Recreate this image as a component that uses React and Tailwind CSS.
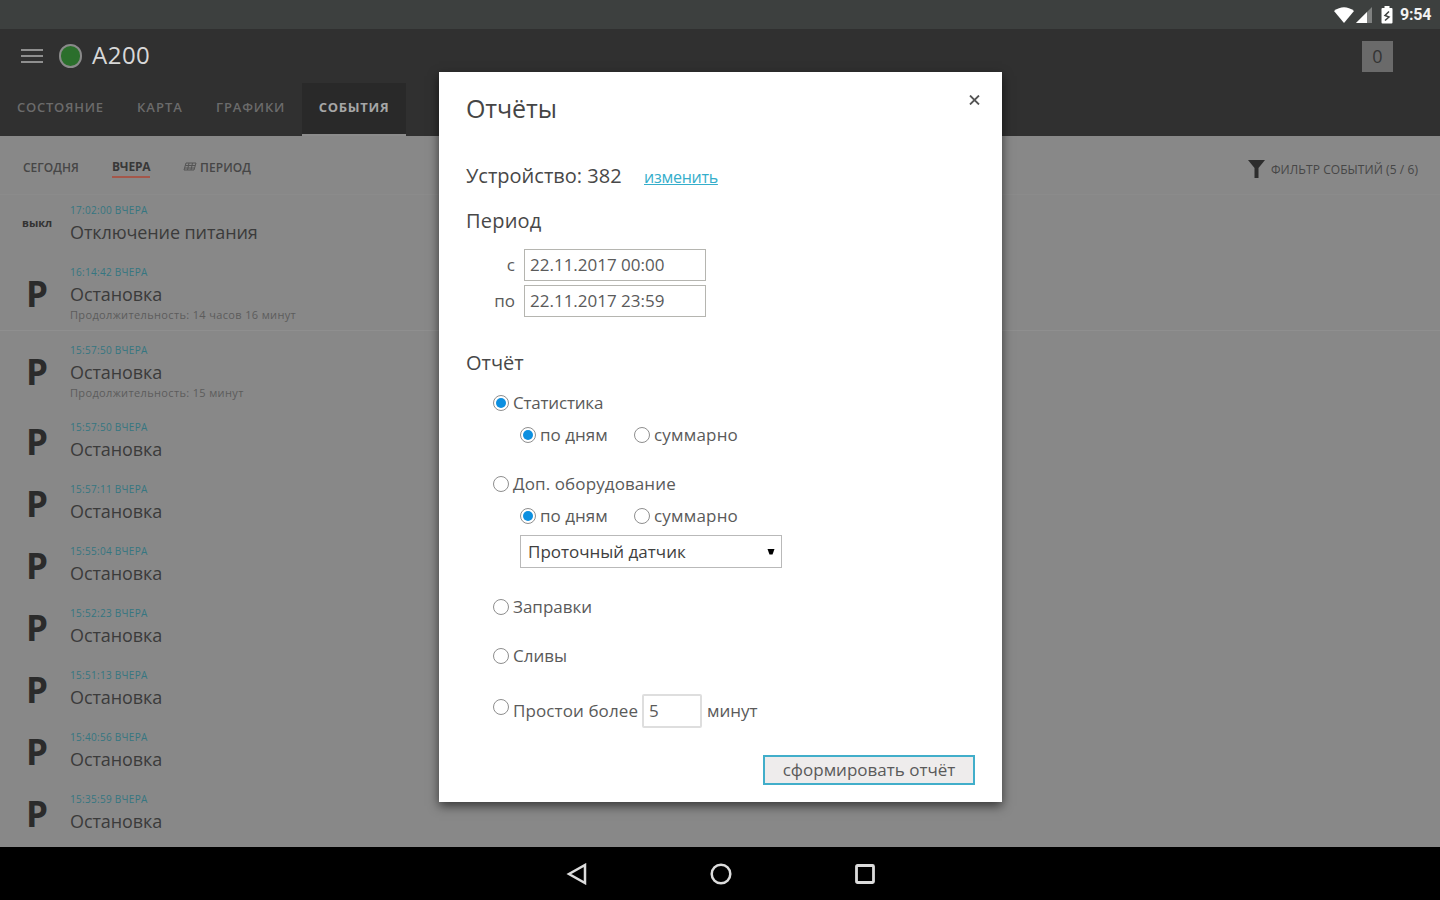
const EVENTS = [
  { time: '17:02:00 ВЧЕРА', title: 'Отключение питания', off: true, h: 'h-[62px]' },
  { time: '16:14:42 ВЧЕРА', title: 'Остановка', note: 'Продолжительность: 14 часов 16 минут', h: 'h-[78px] border-b border-[#8f8f8f]' },
  { time: '15:57:50 ВЧЕРА', title: 'Остановка', note: 'Продолжительность: 15 минут', h: 'h-[77px]' },
  { time: '15:57:50 ВЧЕРА', title: 'Остановка', h: 'h-[62px]' },
  { time: '15:57:11 ВЧЕРА', title: 'Остановка', h: 'h-[62px]' },
  { time: '15:55:04 ВЧЕРА', title: 'Остановка', h: 'h-[62px]' },
  { time: '15:52:23 ВЧЕРА', title: 'Остановка', h: 'h-[62px]' },
  { time: '15:51:13 ВЧЕРА', title: 'Остановка', h: 'h-[62px]' },
  { time: '15:40:56 ВЧЕРА', title: 'Остановка', h: 'h-[62px]' },
  { time: '15:35:59 ВЧЕРА', title: 'Остановка', h: 'h-[62px]' },
];

function StatusBar() {
  return (
    <div className="flex h-[29px] shrink-0 items-center justify-end bg-[#3d403f] pr-2">
      <svg className="mr-px" width="22" height="18" viewBox="0 0 22 18">
        <path d="M11 17 L1 5 Q11 -2.5 21 5 Z" fill="#fff" />
      </svg>
      <svg width="16" height="18" viewBox="0 0 16 18">
        <path d="M0 17 L16 1 V17 Z" fill="#7f8180" />
        <path d="M0 17 L11 6 V17 Z" fill="#fff" />
      </svg>
      <svg className="ml-[9px]" width="12" height="18" viewBox="0 0 12 18">
        <path d="M3.5 0 h5 v2 h2 q1 0 1 1 v13.500 q0 1 -1 1 h-9 q-1 0 -1 -1 V3 q0 -1 1 -1 h2 Z" fill="#fff" />
        <path d="M8 5.500 L4 9.500 L8 11 L4 14.500" fill="none" stroke="#3d403f" strokeWidth="1.500" />
      </svg>
      <span className="ml-[7px] w-[32px] whitespace-nowrap pt-px font-['Roboto',sans-serif] text-[16px] leading-[28px] font-bold tracking-[-0.2px] text-[#f2f2f2]">9:54</span>
    </div>
  );
}

function Header() {
  const tab = 'flex items-center pb-[3px] text-[13px] font-semibold text-[#6b6b6b] whitespace-nowrap';
  return (
    <header className="flex h-[107px] shrink-0 flex-col bg-[#303030]">
      <div className="flex h-[54px] items-center pl-[21px] pr-[47px]">
        <div className="flex w-[22px] flex-col gap-[4px]">
          <div className="h-[2px] bg-[#8f8f8f]" />
          <div className="h-[2px] bg-[#8f8f8f]" />
          <div className="h-[2px] bg-[#8f8f8f]" />
        </div>
        <div className="ml-[16px] h-[24px] w-[23px] rounded-full border-2 border-[#8a8a8a] bg-[#2b6f2c]" />
        <h1 className="ml-[10px] pb-[2px] text-[24px] tracking-[0.5px] text-[#d8d8d8]">A200</h1>
        <div className="ml-auto flex h-[31px] w-[31px] items-center justify-center bg-[#6a6a6a] text-[18px] text-[#343434]">0</div>
      </div>
      <nav className="flex h-[53px] pl-[17px]">
        <div className={`${tab} w-[120px] tracking-[0.75px]`}>СОСТОЯНИЕ</div>
        <div className={`${tab} w-[79px] tracking-[1px]`}>КАРТА</div>
        <div className={`${tab} w-[86px] tracking-[0.85px]`}>ГРАФИКИ</div>
        <div className="flex w-[104px] items-center justify-center border-b-2 border-[#8c8c8c] bg-[#292929] pb-[2px] text-[13px] font-bold tracking-[0.7px] text-[#a6a6a6]">СОБЫТИЯ</div>
      </nav>
    </header>
  );
}

function FilterBar() {
  return (
    <div className="flex h-[59px] shrink-0 items-center border-b border-[#8b8b8b] pl-[23px] pr-[22px] pb-px pt-[5px] text-[12px] font-semibold text-[#464646]">
      <div className="w-[89px] pt-px">СЕГОДНЯ</div>
      <div className="flex w-[71px] pt-px">
        <div className="border-b-2 border-[#a4574a] font-bold tracking-[-0.2px] text-[#383838]">ВЧЕРА</div>
      </div>
      <svg width="14" height="11" viewBox="0 0 14 11" fill="none" stroke="#555" strokeWidth="1">
        <path d="M3 1 H13 L11 8 H1 Z M2.500 3.500 H12 M2 6 H11.500 M6 1 L4.500 8 M9.500 1 L8 8" />
      </svg>
      <div className="ml-[3px] pt-px tracking-[0.1px]">ПЕРИОД</div>
      <svg className="ml-auto mt-[4px]" width="17" height="19" viewBox="0 0 17 19">
        <path d="M0 0 H17 L10.500 8 V18 L6.500 18 V8 Z" fill="#2d2d2d" />
      </svg>
      <div className="ml-[6px] whitespace-nowrap pt-[5px] text-[12px] font-normal tracking-[0.07px]">ФИЛЬТР СОБЫТИЙ (5 / 6)</div>
    </div>
  );
}

function EventRow({ event }) {
  return (
    <div className={`flex shrink-0 ${event.h}`}>
      <div className="flex w-[70px] shrink-0 items-center pl-[22px]">
        {event.off ? (
          <span className="pt-[3px] text-[11px] font-bold text-[#333]">выкл</span>
        ) : (
          <span className="pl-[4px] pt-[5px] text-[35px] leading-[36px] font-bold text-[#2b2b2b]">P</span>
        )}
      </div>
      <div className="flex flex-col whitespace-nowrap pt-[11px]">
        <div className="h-[16px] text-[10px] leading-[16px] tracking-[0.3px] text-[#357681]">{event.time}</div>
        <div className="h-[28px] text-[18px] leading-[28px] tracking-[-0.1px] text-[#3b3b3b]">{event.title}</div>
        {event.note && <div className="text-[11px] leading-[13px] tracking-[0.35px] text-[#5c5c5c]">{event.note}</div>}
      </div>
    </div>
  );
}

function Radio({ checked }) {
  return (
    <span className="flex h-[16px] w-[16px] shrink-0 items-center justify-center rounded-full border border-[#8e8e8e] bg-white">
      {checked && <span className="h-[10px] w-[10px] rounded-full bg-[#0c8fe0]" />}
    </span>
  );
}

function Choice({ checked, children, className = '' }) {
  return (
    <label className={`flex h-[30px] items-center gap-[4px] whitespace-nowrap ${className}`}>
      <Radio checked={checked} />
      <span>{children}</span>
    </label>
  );
}

function PeriodModes() {
  return (
    <div className="flex pl-[54px]">
      <Choice checked className="w-[114px]">по дням</Choice>
      <Choice className="tracking-[0.2px]">суммарно</Choice>
    </div>
  );
}

function ReportDialog() {
  return (
    <section className="absolute left-[439px] top-[72px] flex h-[730px] w-[563px] flex-col bg-white pl-[27px] pr-[27px] text-[17px] text-[#5a5a5a] shadow-[0_4px_10px_rgba(0,0,0,0.6)]">
      <div className="mt-[16px] flex h-[40px] justify-between">
        <h2 className="text-[25px] leading-[40px] tracking-[-0.1px] text-[#454545]">Отчёты</h2>
        <svg className="mr-[-5px] mt-[7px]" width="11" height="10" viewBox="0 0 11 10">
          <path d="M1 0.500 L10 9.500 M10 0.500 L1 9.500" stroke="#555" strokeWidth="1.800" />
        </svg>
      </div>
      <div className="mt-[33px] flex h-[30px] items-center text-[20px] text-[#484848]">
        <span className="w-[178px] whitespace-nowrap">Устройство: 382</span>
        <a className="pt-[2px] text-[16px] tracking-[-0.25px] text-[#35aecb] underline">изменить</a>
      </div>
      <h3 className="mt-[15px] text-[20px] leading-[30px] tracking-[0.2px] text-[#484848]">Период</h3>
      <div className="mt-[13px] flex h-[32px] items-center">
        <span className="w-[49px] text-right">с</span>
        <div className="ml-[9px] flex h-[32px] w-[182px] items-center border border-[#b5b5b0] pl-[5px]">22.11.2017 00:00</div>
      </div>
      <div className="mt-[4px] flex h-[32px] items-center">
        <span className="w-[49px] text-right">по</span>
        <div className="ml-[9px] flex h-[32px] w-[182px] items-center border border-[#b5b5b0] pl-[5px]">22.11.2017 23:59</div>
      </div>
      <h3 className="mt-[31px] text-[20px] leading-[30px] text-[#484848]">Отчёт</h3>
      <Choice checked className="mt-[10px] pl-[27px] tracking-[-0.2px]">Статистика</Choice>
      <div className="mt-[2px]"><PeriodModes /></div>
      <Choice className="mt-[19px] pl-[27px] tracking-[0.1px]">Доп. оборудование</Choice>
      <div className="mt-[2px]"><PeriodModes /></div>
      <div className="ml-[54px] mt-[4px] flex h-[33px] w-[262px] items-center justify-between border border-[#b9b9b9] pl-[7px] pr-[6px] text-[#404040]">
        <span>Проточный датчик</span>
        <svg width="8" height="6" viewBox="0 0 8 6"><path d="M0.500 0 H7.500 L5.500 5.500 H2.500 Z" fill="#000" /></svg>
      </div>
      <Choice className="mt-[24px] pl-[27px]">Заправки</Choice>
      <Choice className="mt-[19px] pl-[27px]">Сливы</Choice>
      <div className="mt-[23px] flex h-[34px] items-center whitespace-nowrap pl-[27px]">
        <span className="mb-[9px]"><Radio /></span>
        <span className="ml-[4px] w-[129px] tracking-[0.1px]">Простои более</span>
        <div className="flex h-[34px] w-[60px] items-center rounded-[2px] border-2 border-[#dedede] pl-[5px]">5</div>
        <span className="ml-[5px]">минут</span>
      </div>
      <div className="mt-[27px] flex justify-end">
        <button className="h-[30px] w-[212px] border-2 border-[#41aeca] bg-[#eeecec] text-[17px] leading-[24px]">сформировать отчёт</button>
      </div>
    </section>
  );
}

function NavBar() {
  return (
    <footer className="flex h-[53px] shrink-0 items-center justify-center gap-[122px] bg-black pl-px">
      <svg width="22" height="22" viewBox="0 0 22 22" fill="none" stroke="#dcdcdc" strokeWidth="2.500">
        <path d="M19 2 V20 L3 11 Z" />
      </svg>
      <svg width="22" height="22" viewBox="0 0 22 22" fill="none" stroke="#dcdcdc" strokeWidth="2.500">
        <circle cx="11" cy="11" r="9.300" />
      </svg>
      <svg width="22" height="22" viewBox="0 0 22 22" fill="none" stroke="#dcdcdc" strokeWidth="2.800">
        <rect x="2.500" y="2.500" width="17" height="17" rx="1" />
      </svg>
    </footer>
  );
}

export default function App() {
  return (
    <div className="relative flex h-[900px] w-[1440px] flex-col overflow-hidden bg-[#888888] font-['Open_Sans',sans-serif]">
      <StatusBar />
      <Header />
      <FilterBar />
      <main className="-mt-[4px] flex min-h-0 flex-1 flex-col overflow-hidden">
        {EVENTS.map((event, i) => (
          <EventRow key={i} event={event} />
        ))}
      </main>
      <NavBar />
      <ReportDialog />
    </div>
  );
}
